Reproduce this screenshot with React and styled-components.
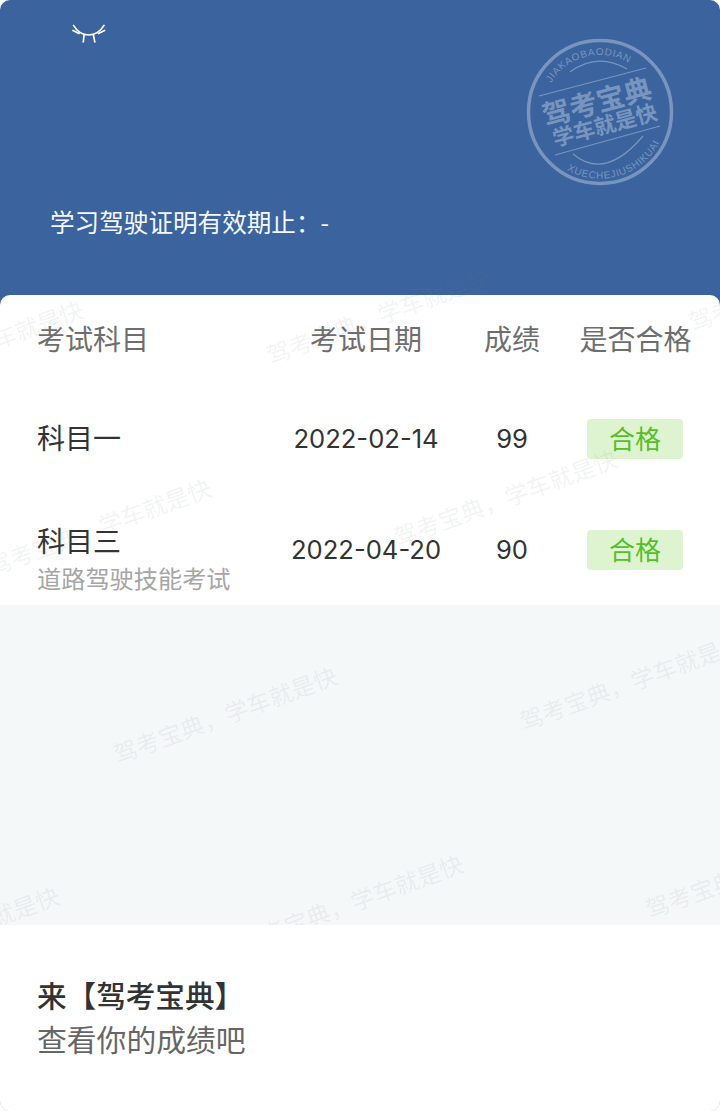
import React from 'react';
import styled, { createGlobalStyle } from 'styled-components';

const GlobalStyle = createGlobalStyle`
  html, body {
    margin: 0;
    padding: 0;
    background: #fff;
  }
  body {
    font-family: "Noto Sans CJK SC", "Noto Sans", sans-serif;
  }
`;

const scores = [
  { name: '科目一', date: '2022-02-14', score: 99, result: '合格' },
  { name: '科目三', desc: '道路驾驶技能考试', date: '2022-04-20', score: 90, result: '合格' },
];

const marks = [
  [378, 315], [800, 282], [-29, 348],
  [505, 497], [99, 526],
  [225, 714], [631, 681],
  [351, 902], [-53, 934], [757, 869],
];

const EyeIcon = () => (
  <svg width="36" height="20" viewBox="0 0 36 20" fill="none" stroke="#fff" strokeWidth="1.7" strokeLinecap="round">
    <path d="M2.5 1.4C6.5 8 12 11 17.5 11S29 8 33 1.4" />
    <path d="M2 6.4L8 9.4" />
    <path d="M33.5 6.4L27.5 9.4" />
    <path d="M13 11.4L12.3 18" />
    <path d="M22.5 11.4L23.8 18" />
  </svg>
);

const Stamp = () => (
  <StampSvg viewBox="0 0 150 150" width="150" height="150">
    <defs>
      <path id="stampTop" d="M 26 46 A 57 57 0 0 1 132 75" />
      <path id="stampBottom" d="M 42 133 A 67 67 0 0 0 142 75" />
    </defs>
    <circle cx="75" cy="75" r="71.5" fill="none" stroke="currentColor" strokeWidth="3.5" />
    <path d="M45 35 Q72 15 102 32" fill="none" stroke="currentColor" strokeWidth="1.2" />
    <path d="M48 117 Q80 144 118 99" fill="none" stroke="currentColor" strokeWidth="1.2" />
    <path d="M14 59 L121 31" stroke="currentColor" strokeWidth="1.2" />
    <path d="M30 118 L135 89" stroke="currentColor" strokeWidth="1.2" />
    <StampArc>
      <textPath href="#stampTop">JIAKAOBAODIAN</textPath>
    </StampArc>
    <StampArc>
      <textPath href="#stampBottom">XUECHEJIUSHIKUAI</textPath>
    </StampArc>
    <StampTitle x="72" y="75" transform="rotate(-15 72 65)">驾考宝典</StampTitle>
    <StampSlogan x="80" y="96" transform="rotate(-15 80 89)">学车就是快</StampSlogan>
  </StampSvg>
);

const App = () => {
  return (
    <Page>
      <GlobalStyle />
      <Header>
        <EyeButton>
          <EyeIcon />
        </EyeButton>
        <Validity>学习驾驶证明有效期止：-</Validity>
        <Stamp />
      </Header>
      <Card>
        <HeadRow>
          <NameCell>考试科目</NameCell>
          <Cell>考试日期</Cell>
          <Cell>成绩</Cell>
          <Cell>是否合格</Cell>
        </HeadRow>
        {scores.map((row) => (
          <Row key={row.name}>
            <NameCell>
              <SubjectName>{row.name}</SubjectName>
              {row.desc && <SubjectDesc>{row.desc}</SubjectDesc>}
            </NameCell>
            <NumberCell>{row.date}</NumberCell>
            <NumberCell>{row.score}</NumberCell>
            <BadgeCell>
              <Badge>{row.result}</Badge>
            </BadgeCell>
          </Row>
        ))}
      </Card>
      <Empty />
      <Watermarks>
        {marks.map(([x, y]) => (
          <Mark key={`${x}-${y}`} $x={x} $y={y}>驾考宝典，学车就是快</Mark>
        ))}
      </Watermarks>
      <Footer>
        <FooterTitle>来【驾考宝典】</FooterTitle>
        <FooterText>查看你的成绩吧</FooterText>
      </Footer>
    </Page>
  );
};

const Page = styled.div`
  position: relative;
  width: 720px;
  height: 1111px;
  overflow: hidden;
  display: flex;
  flex-direction: column;
  background: #fff;
`;

const Header = styled.header`
  position: relative;
  box-sizing: border-box;
  height: 305px;
  flex-shrink: 0;
  padding: 24px 0 0 71px;
  background: #3b639d;
  border-radius: 10px 10px 0 0;
  color: #fff;
`;

const EyeButton = styled.div`
  width: 36px;
  height: 20px;
  line-height: 0;
`;

const Validity = styled.div`
  margin: 159px 0 0 -21px;
  font-size: 24.6px;
  line-height: 36px;
  color: #f4f7fb;
`;

const StampSvg = styled.svg`
  position: absolute;
  top: 37px;
  left: 525px;
  color: #7895c0;
`;

const StampArc = styled.text`
  font-family: "Liberation Sans", sans-serif;
  font-size: 10px;
  letter-spacing: 0.7px;
  fill: currentColor;
`;

const StampTitle = styled.text`
  font-size: 28px;
  font-weight: 700;
  text-anchor: middle;
  fill: currentColor;
`;

const StampSlogan = styled.text`
  font-size: 21.5px;
  font-weight: 700;
  text-anchor: middle;
  fill: currentColor;
`;

const Card = styled.section`
  flex-shrink: 0;
  margin-top: -10px;
  padding: 0 6px 0 37px;
  background: #fff;
  border-radius: 10px 10px 0 0;
  position: relative;
`;

const Row = styled.div`
  display: grid;
  grid-template-columns: 229px 200px 92px 154px;
  align-items: center;
  height: 110.5px;
  font-size: 26px;
  color: #333;
`;

const HeadRow = styled(Row)`
  height: 89px;
  padding-bottom: 3px;
  box-sizing: border-box;
  font-size: 28px;
  color: #6e6e6e;
  grid-template-columns: 229px 200px 92px 155px;
`;

const Cell = styled.div`
  text-align: center;
`;

const NameCell = styled.div`
  text-align: left;
`;

const NumberCell = styled(Cell)`
  font-family: "Inter", "Roboto", sans-serif;
  font-size: 25.6px;
  line-height: 38px;
`;

const BadgeCell = styled(Cell)`
  display: flex;
  justify-content: center;
`;

const SubjectName = styled.div`
  font-size: 28px;
  line-height: 40px;
  margin-top: -4px;
  color: #333;
`;

const SubjectDesc = styled.div`
  margin-bottom: -20px;
  font-size: 24.2px;
  line-height: 36px;
  color: #a6a6a6;
`;

const Badge = styled.span`
  display: block;
  width: 96px;
  height: 40px;
  line-height: 37px;
  border-radius: 4px;
  background: #def4d1;
  color: #55bf28;
  font-size: 26px;
`;

const Empty = styled.div`
  height: 320px;
  flex-shrink: 0;
  background: #f4f8f9;
`;

const Watermarks = styled.div`
  position: absolute;
  top: 0;
  left: 0;
  right: 0;
  height: 925px;
  overflow: hidden;
  pointer-events: none;
`;

const Mark = styled.span`
  position: absolute;
  left: ${(p) => p.$x}px;
  top: ${(p) => p.$y}px;
  transform: translate(-50%, -50%) rotate(-20deg);
  white-space: nowrap;
  font-size: 23.6px;
  color: rgba(120, 130, 135, 0.1);
`;

const Footer = styled.footer`
  flex: 1;
  position: relative;
  padding: 48px 37px 0;
  background: #fff;
  border-radius: 0 0 12px 12px;
  box-shadow: 0 0 0 1px #e8e8e8;
  clip-path: inset(0 -1px -1px -1px);
`;

const FooterTitle = styled.div`
  font-size: 29.6px;
  font-weight: 500;
  line-height: 44px;
  color: #333;
`;

const FooterText = styled.div`
  margin-top: -1px;
  font-size: 29.8px;
  line-height: 44px;
  color: #666;
`;

export default App;
